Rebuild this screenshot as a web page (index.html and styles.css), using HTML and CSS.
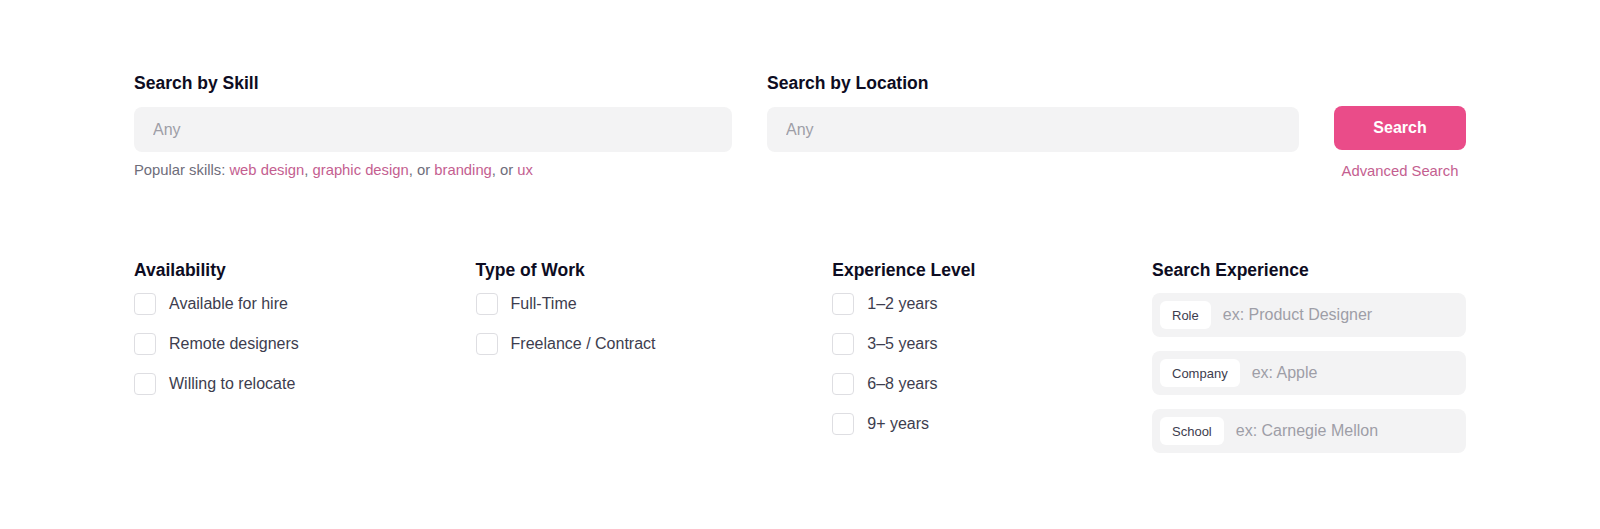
FILE: index.html
```html
<!DOCTYPE html>
<html lang="en">
<head>
<meta charset="utf-8">
<title>Search designers</title>
<link rel="stylesheet" href="styles.css">
</head>
<body>
<main class="page">
  <section class="search-top">
    <h2 class="heading skill-label">Search by Skill</h2>
    <h2 class="heading loc-label">Search by Location</h2>
    <input class="field skill-input" type="text" placeholder="Any">
    <input class="field loc-input" type="text" placeholder="Any">
    <button class="search-btn">Search</button>
    <p class="popular">Popular skills: <a href="#">web design</a>, <a href="#">graphic design</a>, or <a href="#">branding</a>, or <a href="#">ux</a></p>
    <a class="advanced" href="#">Advanced Search</a>
  </section>

  <section class="filters">
    <div class="group">
      <h2 class="heading">Availability</h2>
      <ul class="checks">
        <li><span class="box"></span>Available for hire</li>
        <li><span class="box"></span>Remote designers</li>
        <li><span class="box"></span>Willing to relocate</li>
      </ul>
    </div>
    <div class="group">
      <h2 class="heading">Type of Work</h2>
      <ul class="checks">
        <li><span class="box"></span>Full-Time</li>
        <li><span class="box"></span>Freelance / Contract</li>
      </ul>
    </div>
    <div class="group">
      <h2 class="heading">Experience Level</h2>
      <ul class="checks">
        <li><span class="box"></span>1–2 years</li>
        <li><span class="box"></span>3–5 years</li>
        <li><span class="box"></span>6–8 years</li>
        <li><span class="box"></span>9+ years</li>
      </ul>
    </div>
    <div class="group exp">
      <h2 class="heading">Search Experience</h2>
      <div class="exp-rows">
        <label class="exp-row"><span class="pill">Role</span><span class="ph">ex: Product Designer</span></label>
        <label class="exp-row"><span class="pill">Company</span><span class="ph">ex: Apple</span></label>
        <label class="exp-row"><span class="pill">School</span><span class="ph">ex: Carnegie Mellon</span></label>
      </div>
    </div>
  </section>
</main>
</body>
</html>
```

FILE: styles.css
```css
* { box-sizing: border-box; }

html, body {
  margin: 0;
  background: #ffffff;
}

body {
  font-family: "Liberation Sans", Arial, sans-serif;
  color: #3d3d4e;
}

.page {
  padding: 71px 134px 0 134px;
  width: 1600px;
}

.heading {
  margin: 0;
  font-size: 17.5px;
  line-height: 24px;
  font-weight: 700;
  color: #0d0c22;
}

/* Top search area */
.search-top {
  display: grid;
  grid-template-columns: 1fr 532px 132px;
  column-gap: 35px;
  grid-template-areas:
    "skl loc ."
    "ski lci btn"
    "pop . adv";
}

.skill-label { grid-area: skl; }
.loc-label { grid-area: loc; }
.skill-input { grid-area: ski; }
.loc-input { grid-area: lci; }
.search-btn { grid-area: btn; }
.popular { grid-area: pop; }
.advanced { grid-area: adv; }

.field {
  margin-top: 12px;
  height: 45px;
  border: none;
  outline: none;
  border-radius: 8px;
  background: #f3f3f4;
  padding: 0 19px;
  font-family: "Liberation Sans", Arial, sans-serif;
  font-size: 16px;
  color: #0d0c22;
}

.field::placeholder {
  color: #9e9ea7;
}

.search-btn {
  margin-top: 11px;
  height: 44px;
  border: none;
  border-radius: 8px;
  background: #ea4c89;
  color: #ffffff;
  font-family: "Liberation Sans", Arial, sans-serif;
  font-size: 16px;
  font-weight: 700;
  cursor: pointer;
}

.popular {
  margin: 8px 0 0 0;
  font-size: 14.8px;
  line-height: 20px;
  color: #6e6d7a;
}

.popular a,
.advanced {
  color: #c45e90;
  text-decoration: none;
}

.advanced {
  margin-top: 9px;
  font-size: 14.8px;
  line-height: 20px;
  text-align: center;
}

/* Filters */
.filters {
  margin-top: 77px;
  display: flex;
  justify-content: space-between;
  align-items: flex-start;
}

.checks {
  list-style: none;
  margin: 11px 0 0 0;
  padding: 0;
  display: flex;
  flex-direction: column;
  gap: 18px;
}

.checks li {
  display: flex;
  align-items: center;
  gap: 13px;
  height: 22px;
  font-size: 16px;
  color: #3d3d4e;
}

.box {
  width: 22px;
  height: 22px;
  flex: none;
  border: 1px solid #dedee2;
  border-radius: 4px;
  background: #ffffff;
}

.exp {
  width: 314px;
}

.exp-rows {
  margin-top: 11px;
  display: flex;
  flex-direction: column;
  gap: 14px;
}

.exp-row {
  display: flex;
  align-items: center;
  gap: 12px;
  height: 44px;
  padding: 0 8px;
  border-radius: 8px;
  background: #f3f3f4;
}

.pill {
  height: 28px;
  padding: 0 12px;
  display: flex;
  align-items: center;
  border-radius: 6px;
  background: #ffffff;
  font-size: 13px;
  color: #3d3d4e;
}

.ph {
  font-size: 16px;
  color: #9e9ea7;
}
```
